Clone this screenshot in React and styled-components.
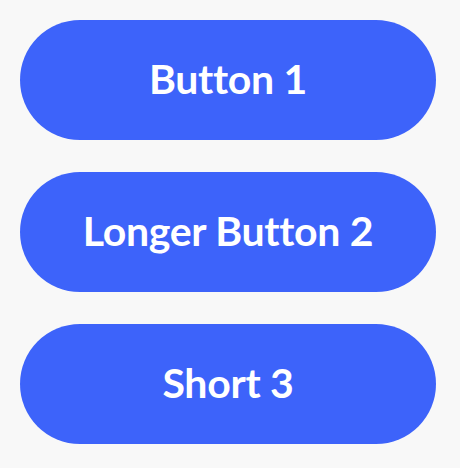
import React from 'react';
import styled, { createGlobalStyle } from 'styled-components';

const GlobalStyle = createGlobalStyle`
  body {
    margin: 0;
    background: #f8f8f8;
    font-family: Lato, "Open Sans", sans-serif;
  }
`;

const Stack = styled.div`
  display: flex;
  flex-direction: column;
  gap: 32px;
  padding: 20px;
  width: 416px;
`;

const PillButton = styled.button`
  height: 120px;
  border: none;
  border-radius: 60px;
  background: #3d63fa;
  color: #fff;
  font-family: Lato, "Open Sans", sans-serif;
  font-weight: 700;
  font-size: 41px;
  letter-spacing: -0.3px;
  padding: 0 0 3px;
  cursor: pointer;
`;

const labels = ['Button 1', 'Longer Button 2', 'Short 3'];

const App = () => {
  return (
    <>
      <GlobalStyle />
      <Stack>
        {labels.map(l => (
          <PillButton key={l}>{l}</PillButton>
        ))}
      </Stack>
    </>
  );
};

export default App;
